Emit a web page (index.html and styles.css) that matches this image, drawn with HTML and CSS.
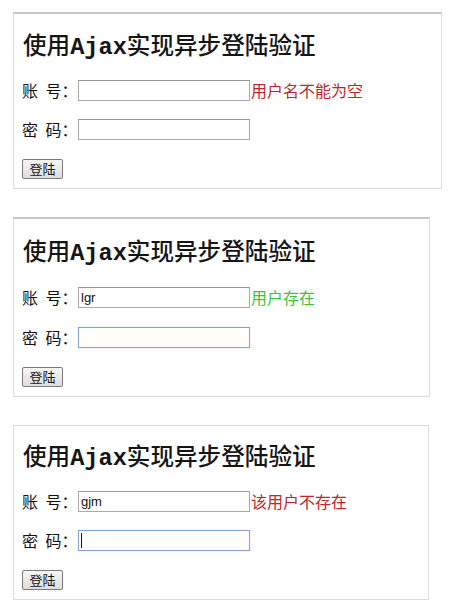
FILE: index.html
```html
<!DOCTYPE html>
<html lang="zh-CN">
<head>
<meta charset="utf-8">
<title>使用Ajax实现异步登陆验证</title>
<link rel="stylesheet" href="styles.css">
</head>
<body>
  <section class="panel panel-wide">
    <h1 class="title">使用<span class="latin">Ajax</span>实现异步登陆验证</h1>
    <div class="row">
      <span class="label">账 号：</span>
      <span class="field"><input class="box" type="text" value=""></span>
      <span class="msg msg-error">用户名不能为空</span>
    </div>
    <div class="row row-pwd">
      <span class="label">密 码：</span>
      <span class="field"><input class="box" type="password" value=""></span>
    </div>
    <button class="btn" type="button">登陆</button>
  </section>

  <section class="panel panel-mid">
    <h1 class="title">使用<span class="latin">Ajax</span>实现异步登陆验证</h1>
    <div class="row">
      <span class="label">账 号：</span>
      <span class="field"><input class="box" type="text" value="lgr"></span>
      <span class="msg msg-ok">用户存在</span>
    </div>
    <div class="row row-pwd">
      <span class="label">密 码：</span>
      <span class="field"><input class="box box-focus" type="password" value=""></span>
    </div>
    <button class="btn" type="button">登陆</button>
  </section>

  <section class="panel panel-narrow">
    <h1 class="title">使用<span class="latin">Ajax</span>实现异步登陆验证</h1>
    <div class="row">
      <span class="label">账 号：</span>
      <span class="field"><input class="box" type="text" value="gjm"></span>
      <span class="msg msg-error">该用户不存在</span>
    </div>
    <div class="row row-pwd">
      <span class="label">密 码：</span>
      <span class="field"><input class="box box-focus" type="password" value=""><span class="caret"></span></span>
    </div>
    <button class="btn" type="button">登陆</button>
  </section>
</body>
</html>
```

FILE: styles.css
```css
* { box-sizing: border-box; }

html, body {
  margin: 0;
  background: #ffffff;
}

body {
  padding: 12px 0 0 13px;
  font-family: "Noto Sans CJK SC", sans-serif;
  color: #111;
}

.panel {
  border: 1px solid #dcdcdc;
  border-top: 2px solid #c8c8c8;
  padding: 0 0 9px 8px;
  margin-bottom: 28px;
}

.panel-wide { width: 429px; }
.panel-mid { width: 417px; }
.panel-narrow { width: 416px; border-top: 1px solid #dcdcdc; }

.title {
  margin: 22px 0 20px 1px;
  height: 24px;
  line-height: 24px;
  font-family: "Liberation Mono", "Noto Sans CJK SC", monospace;
  font-size: 23.6px;
  font-weight: 500;
  color: #151515;
  white-space: nowrap;
}

.latin {
  font-weight: bold;
}

.panel-mid .title { margin-top: 23px; margin-bottom: 21px; }
.panel-narrow .title { margin-top: 21px; margin-bottom: 20px; }

.row {
  display: flex;
  align-items: center;
  height: 21px;
}

.row-pwd { margin-top: 18px; }
.panel-mid .row-pwd { margin-top: 19px; }

.label {
  width: 56px;
  font-size: 16px;
  line-height: 21px;
  white-space: pre;
  word-spacing: 4px;
  color: #111;
}

.field {
  position: relative;
  display: block;
  width: 172px;
  height: 21px;
}

.box {
  display: block;
  width: 172px;
  height: 21px;
  margin: 0;
  padding: 0 2px;
  border: 1px solid #a9a9a9;
  border-top-color: #9a9a9a;
  border-radius: 0;
  background: #fff;
  font-family: "Liberation Sans", Arial, sans-serif;
  font-size: 13px;
  color: #111;
  outline: none;
}

.box-focus {
  border: 1px solid #86a3d6;
  box-shadow: 0 0 1px #bcd0ee;
  background: #fffefa;
}

.caret {
  position: absolute;
  left: 3px;
  top: 3px;
  width: 1px;
  height: 15px;
  background: #111;
}

.msg {
  font-size: 16px;
  line-height: 21px;
  margin-left: 1px;
  white-space: nowrap;
}

.msg-error { color: #c0262d; }
.msg-ok { color: #3cc43c; }

.btn {
  display: block;
  margin-top: 19px;
  width: 41px;
  height: 20px;
  padding: 0;
  border: 1px solid #7a7a7a;
  border-radius: 2px;
  background: linear-gradient(#f6f6f6, #dedede);
  font-family: "Noto Sans CJK SC", sans-serif;
  font-size: 13px;
  line-height: 18px;
  color: #111;
}
```
